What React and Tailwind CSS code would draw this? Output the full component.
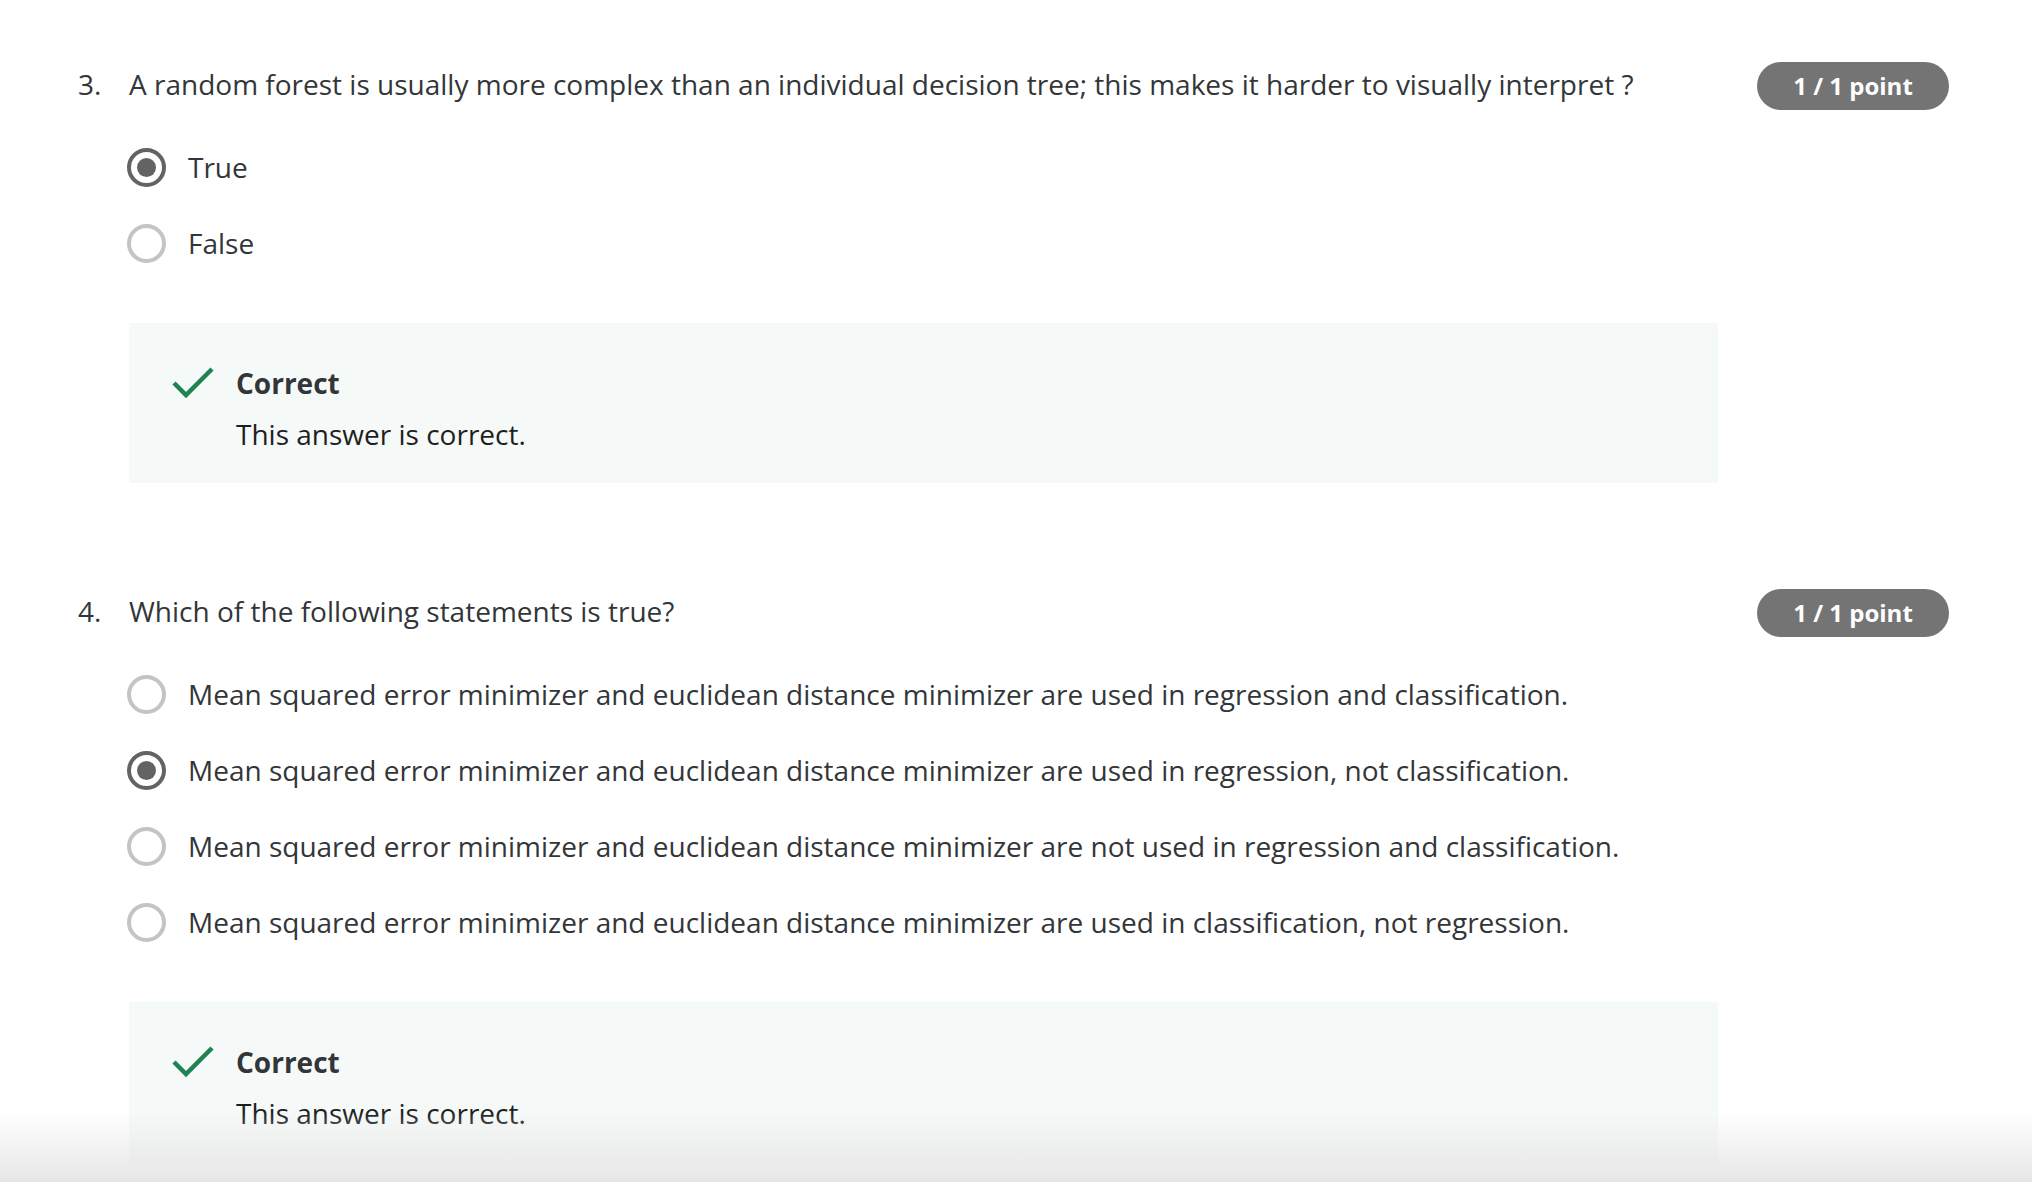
import React from 'react'

const font = { fontFamily: '"Open Sans", "Noto Sans", sans-serif' }

function Radio({ checked }) {
  // selected radio is dark grey ring with a dot, unselected is a light ring
  if (checked) {
    return (
      <span className="flex h-[39px] w-[39px] shrink-0 items-center justify-center rounded-full border-[4px] border-[#636363]">
        <span className="h-[19px] w-[19px] rounded-full bg-[#636363]"></span>
      </span>
    )
  }
  return <span className="h-[39px] w-[39px] shrink-0 rounded-full border-[4px] border-[#c4c4c4]"></span>
}

function Check() {
  return (
    <svg width="42" height="32" viewBox="0 0 42 32" className="shrink-0">
      <path d="M2 16 L14 28 L40 2" fill="none" stroke="#1f8354" strokeWidth="4.5" />
    </svg>
  )
}

function Feedback() {
  return (
    <div className="ml-[51px] mr-[314px] flex gap-[22px] bg-[#f5f9f8] pl-[43px] pr-8 pt-[42px] pb-[31px]">
      <div className="pt-[2px]"><Check /></div>
      <div className="flex flex-col">
        <span className="text-[28px] font-bold leading-[36px] text-[#333639]">Correct</span>
        <span className="mt-[15px] text-[28px] leading-[36px] text-[#1f1f1f]">This answer is correct.</span>
      </div>
    </div>
  )
}

function Question({ num, text, options, selected }) {
  return (
    <div className="flex flex-col">
      <div className="flex items-start pr-[83px]">
        <span className="w-[51px] shrink-0 text-[28px] leading-[44px] text-[#333639]">{num}.</span>
        <span className="flex-1 text-[28px] leading-[44px] text-[#333639]">{text}</span>
        <span className="flex h-[48px] w-[192px] shrink-0 items-center justify-center rounded-full bg-[#747474] text-[24px] font-bold text-white">
          1 / 1 point
        </span>
      </div>
      <div className="mt-[38px] flex flex-col gap-[37px] pl-[49px]">
        {options.map((o, i) => (
          <label key={i} className="flex items-center gap-[22px]">
            <Radio checked={i === selected} />
            <span className="text-[28px] leading-[39px] text-[#333639]">{o}</span>
          </label>
        ))}
      </div>
    </div>
  )
}

export default function App() {
  return (
    <div className="relative h-[1182px] overflow-hidden bg-white pl-[78px] pt-[62px]" style={font}>
      <Question
        num={3}
        text="A random forest is usually more complex than an individual decision tree; this makes it harder to visually interpret ?"
        options={['True', 'False']}
        selected={0}
      />
      <div className="mt-[60px]">
        <Feedback />
      </div>

      <div className="mt-[106px]">
        <Question
          num={4}
          text="Which of the following statements is true?"
          options={[
            'Mean squared error minimizer and euclidean distance minimizer are used in regression and classification.',
            'Mean squared error minimizer and euclidean distance minimizer are used in regression, not classification.',
            'Mean squared error minimizer and euclidean distance minimizer are not used in regression and classification.',
            'Mean squared error minimizer and euclidean distance minimizer are used in classification, not regression.',
          ]}
          selected={1}
        />
      </div>
      <div className="mt-[60px]">
        <Feedback />
      </div>

      <div className="pointer-events-none absolute bottom-0 left-0 right-0 h-[70px] bg-gradient-to-b from-transparent to-[#e6e6e6]"></div>
    </div>
  )
}
